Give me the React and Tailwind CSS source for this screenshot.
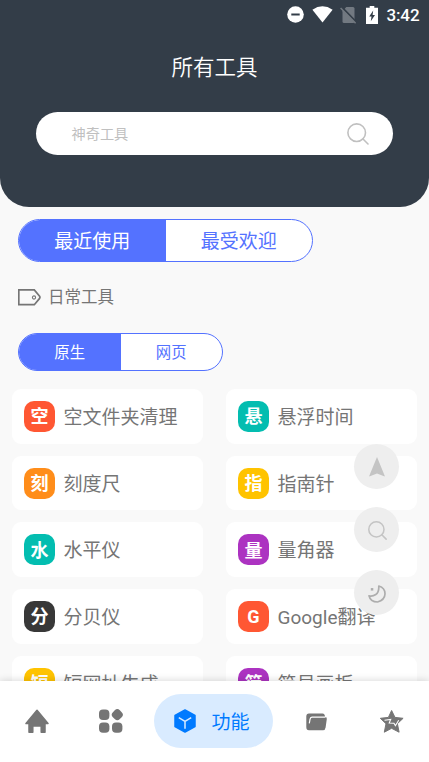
import React, { useState } from 'react';

const tools = [
  { id: 't1', badge: '空', name: '空文件夹清理', color: 'bg-[#ff5733]' },
  { id: 't2', badge: '悬', name: '悬浮时间', color: 'bg-[#03bdb0]' },
  { id: 't3', badge: '刻', name: '刻度尺', color: 'bg-[#ff8d1a]' },
  { id: 't4', badge: '指', name: '指南针', color: 'bg-[#ffc300]' },
  { id: 't5', badge: '水', name: '水平仪', color: 'bg-[#03bdb0]' },
  { id: 't6', badge: '量', name: '量角器', color: 'bg-[#ac33c1]' },
  { id: 't7', badge: '分', name: '分贝仪', color: 'bg-[#383838]' },
  { id: 't8', badge: 'G', name: 'Google翻译', color: 'bg-[#ff5733]' },
  { id: 't9', badge: '短', name: '短网址生成', color: 'bg-[#ffc300]' },
  { id: 't10', badge: '简', name: '简易画板', color: 'bg-[#ac33c1]' },
];

function StatusBar() {
  return (
    <div className="flex h-[29px] items-center justify-end pr-[9.500px] text-white">
      <svg width="17" height="17" viewBox="0 0 17 17" className="mr-[8px]">
        <circle cx="8.5" cy="8.5" r="8.3" fill="currentColor" />
        <path d="M4.3 8.5h8.4" stroke="#333d48" strokeWidth="2" />
      </svg>
      <svg width="21" height="17" viewBox="0 0 21 17" className="mr-[7px]">
        <path d="M.4 3.7Q10.5-3 20.6 3.7L10.5 16.6z" fill="currentColor" />
      </svg>
      <svg width="17" height="18" viewBox="0 0 17 18" className="mr-[9px]">
        <path d="M6.3 1H13q1.500 0 1.500 1.500v13q0 1.500-1.500 1.500H4q-1.500 0-1.500-1.500V5.200z" fill="#727981" />
        <path d="M1.800 1.300 16.500 16.300" stroke="#333d48" strokeWidth="2" />
        <path d="M.6 2 15.600 17.200" stroke="#727981" strokeWidth="1.500" />
      </svg>
      <svg width="12" height="18" viewBox="0 0 12 18" className="mr-[8px]">
        <path d="M3.700 0h4.600v1.800H12V18H0V1.800h3.700z" fill="currentColor" />
        <path d="M7.200 4.500 3.200 10.500h2.300L4.800 15.200 9 9H6.600z" fill="#333d48" />
      </svg>
      <span className="pt-px text-[17px] leading-none font-medium tracking-[-0.1px]">3:42</span>
    </div>
  );
}

function SearchIcon({ size, width }) {
  return (
    <svg width={size} height={size} viewBox="0 0 22 22" fill="none" stroke="currentColor" strokeWidth={width} strokeLinecap="round">
      <circle cx="9.700" cy="9.700" r="8.800" />
      <path d="m16 16 5 5" />
    </svg>
  );
}

function Segmented({ items, value, onChange, className }) {
  return (
    <div className={`flex overflow-hidden rounded-full border border-[#5472ff] bg-white ${className}`}>
      {items.map((label, i) => (
        <button
          key={label}
          type="button"
          onClick={() => onChange(i)}
          className={`flex-1 pt-[3px] ${value === i ? 'bg-[#5472ff] text-white' : 'text-[#5472ff]'}`}
        >
          {label}
        </button>
      ))}
    </div>
  );
}

function ToolCard({ tool }) {
  return (
    <button type="button" className="flex h-[54.700px] items-center rounded-[9px] bg-white pl-3 text-left">
      <span className={`flex size-[31px] shrink-0 items-center justify-center rounded-[10px] pt-[2px] text-[18px] leading-none font-bold text-white ${tool.color}`}>
        {tool.badge}
      </span>
      <span className="ml-[8.500px] pt-[2px] text-[19px] leading-none whitespace-nowrap text-[#757575]">{tool.name}</span>
    </button>
  );
}

function FloatingButton({ children, label }) {
  return (
    <button type="button" aria-label={label} className="flex size-[45px] items-center justify-center rounded-full bg-[#eee] text-[#c4c4c4]">
      {children}
    </button>
  );
}

function BottomNav() {
  return (
    <nav className="relative flex h-[81px] shrink-0 bg-white text-[#757575] shadow-[0_-1px_7px_rgba(0,0,0,0.14)]">
      <button type="button" aria-label="home" className="mt-[28px] ml-[25px] size-[24px]">
        <svg width="24" height="24" viewBox="0 0 24 24" fill="currentColor" stroke="currentColor" strokeWidth="1.500" strokeLinejoin="round">
          <path d="M12 1.300 1 14.600h3V23.200h3.800V17h8.400v6.200H20v-8.600h3z" />
        </svg>
      </button>
      <button type="button" aria-label="apps" className="mt-[28px] ml-[50px] size-[24px]">
        <svg width="24" height="24" viewBox="0 0 24 24" fill="currentColor">
          <rect x="0" y="0.500" width="10.400" height="10.400" rx="4" />
          <rect x="13.400" y="0.800" width="9.800" height="9.800" rx="3.600" transform="rotate(45 18.300 5.700)" />
          <rect x="0" y="13.400" width="10.400" height="10.400" rx="4" />
          <rect x="13" y="13.400" width="10.400" height="10.400" rx="4" />
        </svg>
      </button>
      <button type="button" className="mt-[13px] ml-[31px] flex h-[54px] w-[119px] items-center rounded-full bg-[#d9ebff] pl-[20px] text-[#007aff]">
        <svg width="22" height="24" viewBox="0 0 22 24">
          <path d="M11 1 21 6.500v11L11 23 1 17.500v-11z" fill="currentColor" stroke="currentColor" strokeWidth="1.500" strokeLinejoin="round" />
          <path d="M4.800 8.700 11 12.400l6.200-3.700M11 12.400v7.400" fill="none" stroke="#d9ebff" strokeWidth="1.500" />
        </svg>
        <span className="ml-[15.500px] pt-[4px] text-[19px]">功能</span>
      </button>
      <button type="button" aria-label="files" className="mt-[32px] ml-[33px] h-[18px] w-[21px]">
        <svg width="21" height="18" viewBox="0 0 21 18">
          <path d="M3 .5h13.500Q19 .5 19 4h.3q1.700.2 1.500 2l-1.200 8.500Q19.200 17.300 17 17.300H3Q.3 17.300 .3 14V3.500Q.3.500 3 .5z" fill="currentColor" />
          <path d="M3.300 10.300 4 6.300Q4.300 4.200 6 4.200h13.500" fill="none" stroke="white" strokeWidth="1.200" />
        </svg>
      </button>
      <button type="button" aria-label="favorites" className="mt-[28px] ml-[53px] size-[24px]">
        <svg width="24" height="24" viewBox="0 0 24 24">
          <path d="m11.600 1.500 3.400 6.900 8.100.9-5.700 5.400 1.700 8.500-7.500-3.900-7.300 3.900 1.700-8.500L.3 9.300l8.100-.9z" fill="currentColor" stroke="currentColor" strokeLinejoin="round" />
          <path d="m4.500 11.200 6.200-.7-1.500 3.600 4.800.2 1.400 2.400 3.300-5.500" fill="none" stroke="white" strokeWidth="1.100" />
        </svg>
      </button>
    </nav>
  );
}

export default function App() {
  const [sort, setSort] = useState(0);
  const [kind, setKind] = useState(0);

  return (
    <div className="relative mx-auto flex h-[762px] w-[429px] flex-col overflow-hidden bg-[#f9f9f9] font-[Roboto,'Noto_Sans_CJK_SC',sans-serif]">
      <header className="h-[207px] shrink-0 rounded-b-[29px] bg-[#333d48]">
        <StatusBar />
        <h1 className="mt-[23px] text-center text-[21.500px] leading-[32px] font-[350] text-white">所有工具</h1>
        <div className="mx-9 mt-[28px] flex h-[43px] items-center justify-between rounded-full bg-white pr-[24px] pl-[35.500px] text-[#c0c0c0]">
          <span className="pt-[3px] text-[14.200px]">神奇工具</span>
          <SearchIcon size={22} width={1.6} />
        </div>
      </header>

      <main className="min-h-0 flex-1 overflow-hidden">
        <Segmented items={['最近使用', '最受欢迎']} value={sort} onChange={setSort} className="mt-3 ml-[18px] h-[43px] w-[295px] text-[19px]" />
        <div className="mt-[23px] ml-[18px] flex h-6 items-center text-[#757575]">
          <svg width="23" height="17" viewBox="0 0 23 17" fill="none" stroke="currentColor">
            <path d="M.8.900h15.500l5.300 6.300q.7 1.100 0 2.200l-5.300 6.300H.8z" strokeWidth="1.700" />
            <circle cx="16" cy="8.500" r="1.600" strokeWidth="1.100" />
          </svg>
          <h2 className="ml-[7px] pt-[3px] text-[16.500px] leading-none">日常工具</h2>
        </div>
        <Segmented items={['原生', '网页']} value={kind} onChange={setKind} className="mt-6 ml-[18px] h-[38px] w-[205px] text-[15.400px]" />
        <div className="mt-[18px] grid grid-cols-2 gap-x-[23px] gap-y-3 px-3">
          {tools.map((tool) => (
            <ToolCard key={tool.id} tool={tool} />
          ))}
        </div>
      </main>

      {/* Quick actions floating above the list */}
      <div className="absolute top-[444px] right-[30px] flex flex-col gap-[18px]">
        <FloatingButton label="top">
          <svg width="16" height="20" viewBox="0 0 16 20" fill="currentColor">
            <path d="M8 0 15.700 18.800q.2.800-.6.500L8 16.500.9 19.300q-.8.300-.6-.5z" />
          </svg>
        </FloatingButton>
        <FloatingButton label="search">
          <span className="pt-[2px] pl-[2px]">
            <SearchIcon size={19} width={1.8} />
          </span>
        </FloatingButton>
        <FloatingButton label="dark mode">
          <svg width="18" height="18" viewBox="0 0 18 18" fill="none" stroke="#adadad" strokeWidth="1.700" strokeLinejoin="round" className="mt-[2px]">
            <path d="M10.800 1Q17.200 3 17 9t-7.500 8Q2.500 17 1 10.800q3.500.8 6.800-1.200T10.800 1z" />
            <path d="M2.800 4.300h2.500" strokeWidth="2.500" />
          </svg>
        </FloatingButton>
      </div>

      <BottomNav />
    </div>
  );
}
